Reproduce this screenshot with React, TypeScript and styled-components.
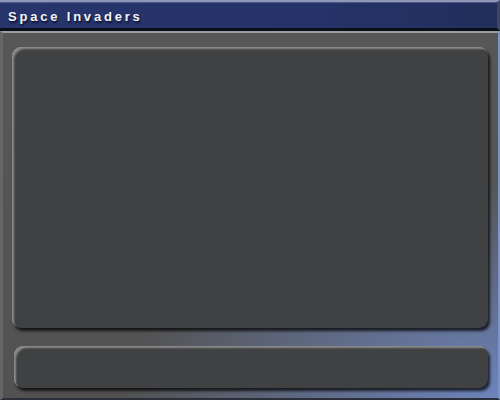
import React from "react";
import styled, { createGlobalStyle } from "styled-components";

const Global = createGlobalStyle`
  html, body {
    margin: 0;
    padding: 0;
    width: 100%;
    height: 100%;
    overflow: hidden;
    background: #1a1f2e;
  }
  #root {
    height: 100%;
  }
`;

const Frame = styled.div`
  width: 500px;
  height: 400px;
  display: flex;
  flex-direction: column;
  font-family: "Liberation Sans", Arial, sans-serif;
`;

const TitleBar = styled.div`
  flex: none;
  display: flex;
  align-items: center;
  padding: 2px 0 0 8px;
  box-sizing: border-box;
  height: 31px;
  background: linear-gradient(90deg, #28356c 0%, #26336a 60%, #222f5c 100%);
  border-top: 2px solid #8e98b6;
  border-bottom: 3px solid #0a0e18;
  border-right: 3px solid #3d4660;
  box-shadow: inset 0 1px 0 #4b5784;
`;

const Title = styled.span`
  color: #f2f4fa;
  font-size: 13px;
  font-weight: bold;
  letter-spacing: 2.8px;
  text-shadow: 1px 2px 2px #0a0f2a;
`;

const Body = styled.div`
  flex: 1;
  display: flex;
  flex-direction: column;
  gap: 18px;
  padding: 14px 10px 10px 9px;
  border-top: 2px solid #9c9c9c;
  border-left: 3px solid #666;
  border-right: 2px solid #7e93c8;
  border-bottom: 2px solid #2a2f3a;
  background:
    radial-gradient(ellipse 75% 60% at 100% 100%, #6d84bd 0%, rgba(109, 132, 189, 0.6) 40%, rgba(90, 100, 130, 0) 100%),
    linear-gradient(180deg, #575757 0%, #525252 100%);
`;

const Panel = styled.div<{ $grow?: boolean; $indent?: number }>`
  flex: ${({ $grow }) => ($grow ? 1 : "none")};
  height: ${({ $grow }) => ($grow ? "auto" : "42px")};
  margin-left: ${({ $indent = 0 }) => $indent}px;
  border-radius: 9px;
  background: #404142;
  box-shadow:
    inset 4px 4px 2px -2px #888,
    inset 1px 1px 0 #a4a4a4,
    2px 3px 3px rgba(0, 0, 0, 0.75);
`;

export default function App() {
  return (
    <>
      <Global />
      <Frame>
        <TitleBar>
          <Title>Space Invaders</Title>
        </TitleBar>
        <Body>
          <Panel $grow />
          <Panel $indent={2} />
        </Body>
      </Frame>
    </>
  );
}
